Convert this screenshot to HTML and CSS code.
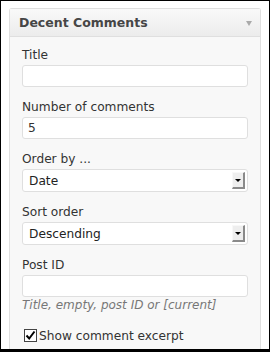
FILE: index.html
```html
<!DOCTYPE html>
<html lang="en">
<head>
    <meta charset="UTF-8">
    <title>Decent Comments widget</title>
    <link rel="stylesheet" href="styles.css">
</head>
<body>
    <div class="widget">
        <!-- Widget title bar -->
        <div class="widget-top">
            <h3>Decent Comments</h3>
            <span class="toggle"></span>
        </div>

        <div class="widget-inside">
            <div class="field">
                <label>Title</label>
                <input type="text" class="text-input">
            </div>

            <div class="field">
                <label>Number of comments</label>
                <input type="text" class="text-input" value="5">
            </div>

            <div class="field">
                <label>Order by ...</label>
                <div class="fake-select">
                    <span>Date</span>
                    <span class="drop-btn"><span class="arrow"></span></span>
                </div>
            </div>

            <div class="field">
                <label>Sort order</label>
                <div class="fake-select">
                    <span>Descending</span>
                    <span class="drop-btn"><span class="arrow"></span></span>
                </div>
            </div>

            <div class="field field-last">
                <label>Post ID</label>
                <input type="text" class="text-input">
                <span class="hint">Title, empty, post ID or [current]</span>
            </div>

            <div class="check-row">
                <span class="checkbox">
                    <svg width="11" height="11" viewBox="0 0 11 11"><path d="M1.5 5.5 L4.2 8.5 L9.5 1.5" fill="none" stroke="#000" stroke-width="2"/></svg>
                </span>
                <span>Show comment excerpt</span>
            </div>
        </div>
    </div>
</body>
</html>
```

FILE: styles.css
```css
* {
    margin: 0;
    padding: 0;
    box-sizing: border-box;
}

html, body {
    height: 100%;
}

body {
    font-family: 'DejaVu Sans', sans-serif;
    font-size: 12.2px;
    color: #333;
    background-color: #fff;
    border: 1px solid #000;
    border-bottom-width: 3px;
    overflow: hidden;
    padding: 7px 0 0 8px;
}

.widget {
    width: 252px;
    height: 100%;
    border: 1px solid #dfdfdf;
    border-bottom: none;
    border-radius: 3px 3px 0 0;
    background-color: #f8f8f8;
}

.widget-top {
    height: 28px;
    display: flex;
    align-items: center;
    justify-content: space-between;
    padding: 0 8px 0 9px;
    background: linear-gradient(to bottom, #f9f9f9, #ececec);
    border-bottom: 1px solid #dfdfdf;
}

.widget-top h3 {
    font-size: 12.5px;
    font-weight: bold;
    color: #464646;
}

.toggle {
    width: 0;
    height: 0;
    border-left: 3.5px solid transparent;
    border-right: 3.5px solid transparent;
    border-top: 5px solid #aaa;
    margin-top: 1px;
}

.widget-inside {
    padding: 11px 12px 0 12px;
}

.field {
    margin-bottom: 13px;
}

.field-last {
    margin-bottom: 0;
}

label {
    display: block;
    line-height: 14px;
    margin-bottom: 3px;
}

.text-input {
    display: block;
    width: 100%;
    height: 22px;
    border: 1px solid #dfdfdf;
    border-radius: 3px;
    background-color: #fff;
    font-family: 'DejaVu Sans', sans-serif;
    font-size: 12.2px;
    color: #333;
    padding: 0 5px;
    outline: none;
}

.fake-select {
    display: flex;
    align-items: center;
    justify-content: space-between;
    height: 23px;
    border: 1px solid #dfdfdf;
    border-radius: 3px;
    background-color: #fff;
    padding: 0 2px 0 6px;
    color: #222;
}

.drop-btn {
    width: 13px;
    height: 17px;
    background-color: #eeeeee;
    border-top: 1px solid #f8f8f8;
    border-left: 1px solid #f8f8f8;
    border-right: 2px solid #8a8a8a;
    border-bottom: 2px solid #8a8a8a;
    display: flex;
    align-items: center;
    justify-content: center;
}

.arrow {
    width: 0;
    height: 0;
    border-left: 3px solid transparent;
    border-right: 3px solid transparent;
    border-top: 3px solid #000;
    margin-top: 1px;
}

.hint {
    display: block;
    font-size: 12px;
    font-style: italic;
    color: #777;
    line-height: 14px;
    margin-top: 1px;
}

.check-row {
    display: flex;
    align-items: center;
    height: 15px;
    margin-top: 16px;
    padding-left: 2px;
}

.checkbox {
    width: 13px;
    height: 13px;
    border: 1px solid #444;
    background-color: #fff;
    margin-right: 2px;
    display: flex;
    align-items: center;
    justify-content: center;
}
```
